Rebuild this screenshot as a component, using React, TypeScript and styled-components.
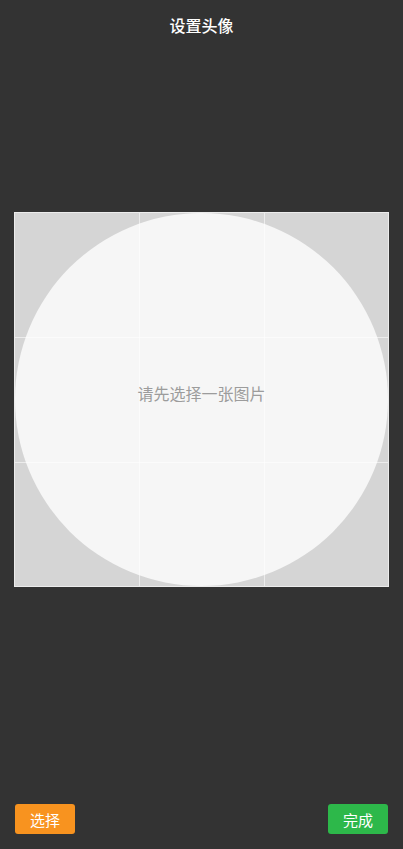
import React from 'react';
import styled, { createGlobalStyle } from 'styled-components';

const GlobalStyle = createGlobalStyle`
  html, body {
    margin: 0;
    padding: 0;
    background: #333333;
  }
  body {
    font-family: "Noto Sans CJK SC", "Noto Sans", sans-serif;
  }
`;

const Page = styled.div`
  display: flex;
  flex-direction: column;
  height: 100vh;
  background: #333333;
`;

const Header = styled.div`
  height: 50px;
  display: flex;
  align-items: center;
  justify-content: center;
  color: #ffffff;
  font-size: 16px;
  font-weight: 500;
`;

const Stage = styled.div`
  flex: 1;
  padding: 162px 14px 0;
`;

const CropBox = styled.div`
  position: relative;
  box-sizing: border-box;
  width: 100%;
  aspect-ratio: 1;
  background: #d5d5d5;
  border: 1px solid #ececec;
  overflow: hidden;
`;

const Circle = styled.div`
  position: absolute;
  inset: 0;
  border-radius: 50%;
  background: #f6f6f6;
`;

const GridLine = styled.div<{ $dir: 'h' | 'v'; $at: number }>`
  position: absolute;
  background: rgba(255, 255, 255, 0.55);
  ${({ $dir, $at }) =>
    $dir === 'h'
      ? `left: 0; right: 0; height: 1px; top: ${$at}%;`
      : `top: 0; bottom: 0; width: 1px; left: ${$at}%;`}
`;

const Hint = styled.div`
  position: absolute;
  inset: 0;
  display: flex;
  align-items: center;
  justify-content: center;
  padding-bottom: 14px;
  color: #9c9c9c;
  font-size: 16px;
`;

const Footer = styled.div`
  display: flex;
  justify-content: space-between;
  padding: 0 15px 15px;
`;

const Button = styled.button<{ $color: string }>`
  width: 60px;
  height: 30px;
  border: none;
  border-radius: 3px;
  background: ${({ $color }) => $color};
  color: #ffffff;
  font-family: inherit;
  font-size: 15px;
  padding: 0;
`;

export default function App() {
  return (
    <Page>
      <GlobalStyle />
      <Header>设置头像</Header>
      <Stage>
        <CropBox>
          <Circle />
          <GridLine $dir="h" $at={33.33} />
          <GridLine $dir="h" $at={66.66} />
          <GridLine $dir="v" $at={33.33} />
          <GridLine $dir="v" $at={66.66} />
          <Hint>请先选择一张图片</Hint>
        </CropBox>
      </Stage>
      <Footer>
        <Button $color="#f8931f">选择</Button>
        <Button $color="#2db84a">完成</Button>
      </Footer>
    </Page>
  );
}
